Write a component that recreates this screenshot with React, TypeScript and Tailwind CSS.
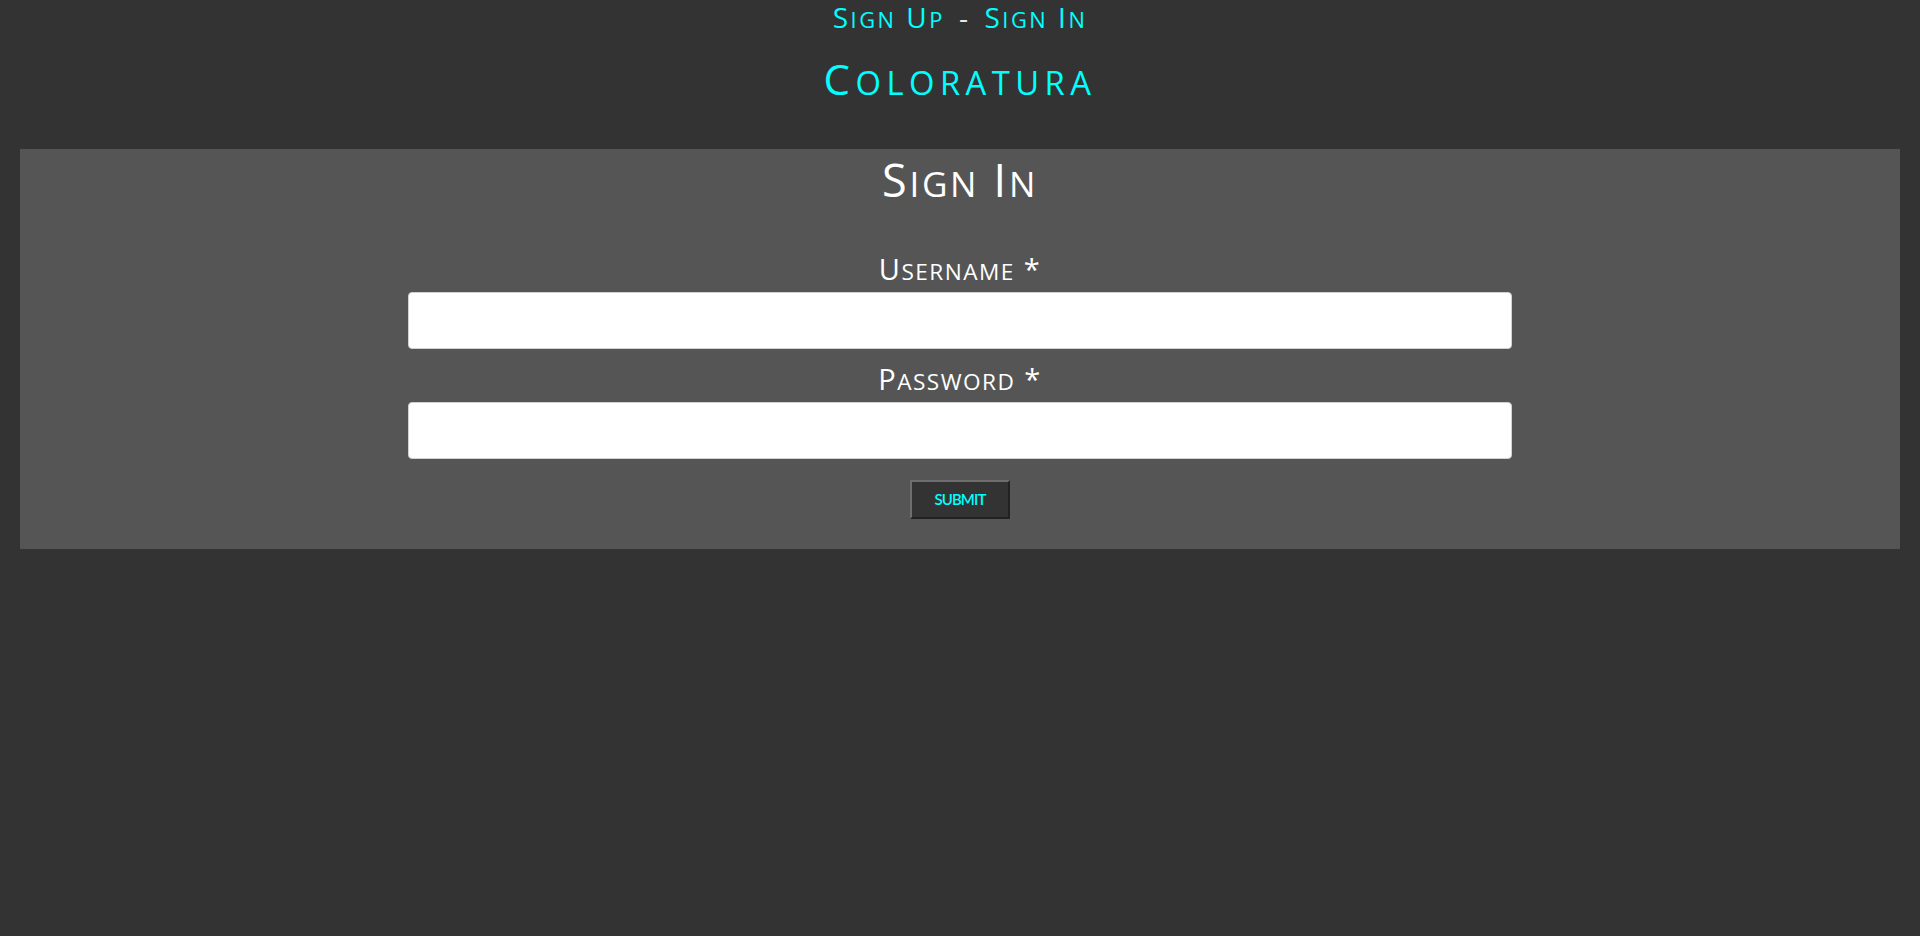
// small caps: first letter of each word at full size, rest uppercase and smaller
function SC({ text }: { text: string }) {
    const words = text.split(" ");
    return (
        <>
            {words.map((w, i) => (
                <span key={i}>
                    {i > 0 && " "}
                    {w[0]}
                    <span className="text-[0.78em] leading-none uppercase">{w.slice(1)}</span>
                </span>
            ))}
        </>
    );
}

export default function App() {
    return (
        <div
            className="min-h-[936px] w-full bg-[#333333] text-white"
            style={{ fontFamily: "'Open Sans', Lato, sans-serif" }}
        >
            {/* Top nav */}
            <nav className="flex justify-center gap-[14px] text-[28px] leading-[34px] tracking-[0.09em]">
                <a className="text-[#00ffff]"><SC text="Sign Up" /></a>
                <span className="text-[#e8e8e8]">-</span>
                <a className="text-[#00ffff]"><SC text="Sign In" /></a>
            </nav>

            {/* Brand */}
            <h1 className="mt-[20px] text-center text-[42px] leading-[50px] tracking-[0.13em] text-[#00ffff]">
                <SC text="Coloratura" />
            </h1>

            {/* Sign in panel */}
            <section className="mx-[20px] mt-[45px] bg-[#555555] px-[20px] pt-[4px] pb-[30px]">
                <h2 className="text-center text-[45px] leading-[54px] tracking-[0.06em]">
                    <SC text="Sign In" />
                </h2>

                <form className="mx-auto mt-[44px] flex w-[60%] flex-col items-center">
                    <label className="mb-[5px] text-[29px] leading-[36px] tracking-[0.05em]">
                        <SC text="Username *" />
                    </label>
                    <input
                        type="text"
                        className="mb-[12px] h-[57px] w-full rounded-[4px] border border-[#d0d0d0] bg-white"
                    />

                    <label className="mb-[5px] text-[29px] leading-[36px] tracking-[0.05em]">
                        <SC text="Password *" />
                    </label>
                    <input
                        type="password"
                        className="h-[57px] w-full rounded-[4px] border border-[#d0d0d0] bg-white"
                    />

                    <button
                        type="button"
                        className="mt-[21px] h-[39px] w-[100px] border-2 border-t-[#6e6e6e] border-l-[#6e6e6e] border-b-[#222222] border-r-[#222222] bg-[#333333] text-[15px] font-semibold uppercase tracking-[-0.06em] text-[#00ffff]"
                        style={{ fontFamily: "Lato, sans-serif" }}
                    >
                        Submit
                    </button>
                </form>
            </section>
        </div>
    );
}
